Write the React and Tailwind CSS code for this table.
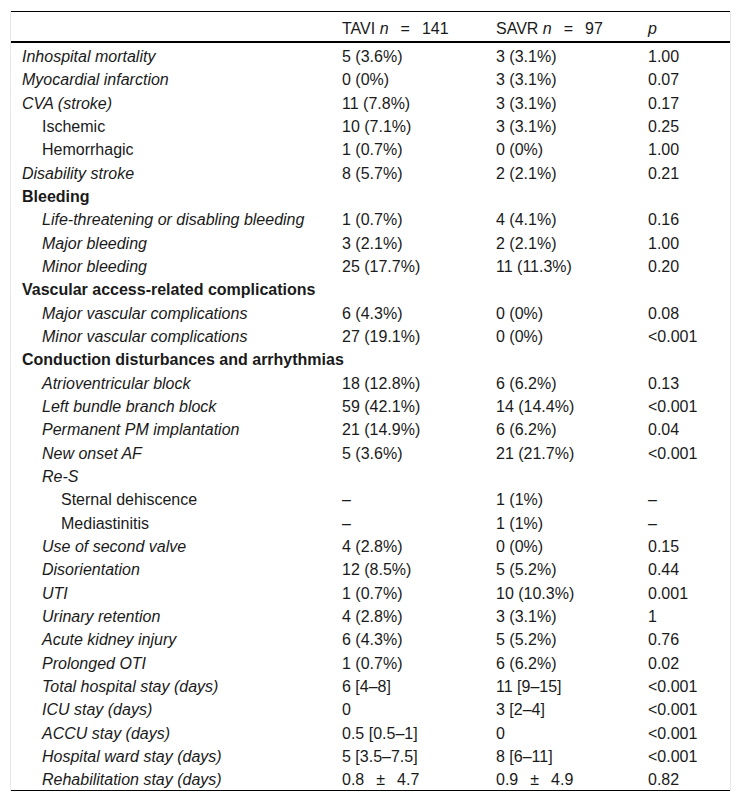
import React from "react";

const rows = [
  { l: "Inhospital mortality", lv: 0, it: true, a: "5 (3.6%)", b: "3 (3.1%)", p: "1.00" },
  { l: "Myocardial infarction", lv: 0, it: true, a: "0 (0%)", b: "3 (3.1%)", p: "0.07" },
  { l: "CVA (stroke)", lv: 0, it: true, a: "11 (7.8%)", b: "3 (3.1%)", p: "0.17" },
  { l: "Ischemic", lv: 1, it: false, a: "10 (7.1%)", b: "3 (3.1%)", p: "0.25" },
  { l: "Hemorrhagic", lv: 1, it: false, a: "1 (0.7%)", b: "0 (0%)", p: "1.00" },
  { l: "Disability stroke", lv: 0, it: true, a: "8 (5.7%)", b: "2 (2.1%)", p: "0.21" },
  { l: "Bleeding", lv: 0, bold: true },
  { l: "Life-threatening or disabling bleeding", lv: 1, it: true, a: "1 (0.7%)", b: "4 (4.1%)", p: "0.16" },
  { l: "Major bleeding", lv: 1, it: true, a: "3 (2.1%)", b: "2 (2.1%)", p: "1.00" },
  { l: "Minor bleeding", lv: 1, it: true, a: "25 (17.7%)", b: "11 (11.3%)", p: "0.20" },
  { l: "Vascular access-related complications", lv: 0, bold: true },
  { l: "Major vascular complications", lv: 1, it: true, a: "6 (4.3%)", b: "0 (0%)", p: "0.08" },
  { l: "Minor vascular complications", lv: 1, it: true, a: "27 (19.1%)", b: "0 (0%)", p: "<0.001" },
  { l: "Conduction disturbances and arrhythmias", lv: 0, bold: true },
  { l: "Atrioventricular block", lv: 1, it: true, a: "18 (12.8%)", b: "6 (6.2%)", p: "0.13" },
  { l: "Left bundle branch block", lv: 1, it: true, a: "59 (42.1%)", b: "14 (14.4%)", p: "<0.001" },
  { l: "Permanent PM implantation", lv: 1, it: true, a: "21 (14.9%)", b: "6 (6.2%)", p: "0.04" },
  { l: "New onset AF", lv: 1, it: true, a: "5 (3.6%)", b: "21 (21.7%)", p: "<0.001" },
  { l: "Re-S", lv: 1, it: true },
  { l: "Sternal dehiscence", lv: 2, it: false, a: "–", b: "1 (1%)", p: "–" },
  { l: "Mediastinitis", lv: 2, it: false, a: "–", b: "1 (1%)", p: "–" },
  { l: "Use of second valve", lv: 1, it: true, a: "4 (2.8%)", b: "0 (0%)", p: "0.15" },
  { l: "Disorientation", lv: 1, it: true, a: "12 (8.5%)", b: "5 (5.2%)", p: "0.44" },
  { l: "UTI", lv: 1, it: true, a: "1 (0.7%)", b: "10 (10.3%)", p: "0.001" },
  { l: "Urinary retention", lv: 1, it: true, a: "4 (2.8%)", b: "3 (3.1%)", p: "1" },
  { l: "Acute kidney injury", lv: 1, it: true, a: "6 (4.3%)", b: "5 (5.2%)", p: "0.76" },
  { l: "Prolonged OTI", lv: 1, it: true, a: "1 (0.7%)", b: "6 (6.2%)", p: "0.02" },
  { l: "Total hospital stay (days)", lv: 1, it: true, a: "6 [4–8]", b: "11 [9–15]", p: "<0.001" },
  { l: "ICU stay (days)", lv: 1, it: true, a: "0", b: "3 [2–4]", p: "<0.001" },
  { l: "ACCU stay (days)", lv: 1, it: true, a: "0.5 [0.5–1]", b: "0", p: "<0.001" },
  { l: "Hospital ward stay (days)", lv: 1, it: true, a: "5 [3.5–7.5]", b: "8 [6–11]", p: "<0.001" },
  { l: "Rehabilitation stay (days)", lv: 1, it: true, a: "pm1", b: "pm2", p: "0.82" },
];

function Val({ v }) {
  if (v === "pm1")
    return (
      <span>
        0.8<span className="mx-[12px]">±</span>4.7
      </span>
    );
  if (v === "pm2")
    return (
      <span>
        0.9<span className="mx-[12px]">±</span>4.9
      </span>
    );
  return <span>{v}</span>;
}

const indent = ["pl-[11px]", "pl-[31px]", "pl-[50px]"];

export default function App() {
  return (
    <div
      className="bg-white w-[741px] h-[804px] pt-[11px] pl-[10px] text-[16px] text-[#1a1a1a]"
      style={{ fontFamily: '"Liberation Sans", Arial, sans-serif' }}
    >
      <div className="w-[721px] border-x border-[#e8e8e8]">
        <div className="w-[719px] border-t border-black">
          <div className="grid grid-cols-[320px_154px_152px_93px] h-[31px] pt-[4px] items-center border-b-2 border-black">
            <div></div>
            <div className="pl-[11px] whitespace-nowrap">
              TAVI <i>n</i>
              <span className="mx-[12px]">=</span>141
            </div>
            <div className="pl-[11px] whitespace-nowrap">
              SAVR <i>n</i>
              <span className="mx-[12px]">=</span>97
            </div>
            <div className="pl-[11px]">
              <i>p</i>
            </div>
          </div>
          <div className="border-b border-black">
            {rows.map((r, i) => (
              <div
                key={i}
                className="grid grid-cols-[320px_154px_152px_93px] h-[23.34px] pt-[4px] items-center leading-[19px] whitespace-nowrap"
              >
                <div
                  className={`${indent[r.lv]} ${r.it ? "italic" : ""} ${r.bold ? "font-bold" : ""}`}
                >
                  {r.l}
                </div>
                <div className="pl-[11px]">{r.a && <Val v={r.a} />}</div>
                <div className="pl-[11px]">{r.b && <Val v={r.b} />}</div>
                <div className="pl-[11px]">{r.p}</div>
              </div>
            ))}
          </div>
        </div>
      </div>
    </div>
  );
}
